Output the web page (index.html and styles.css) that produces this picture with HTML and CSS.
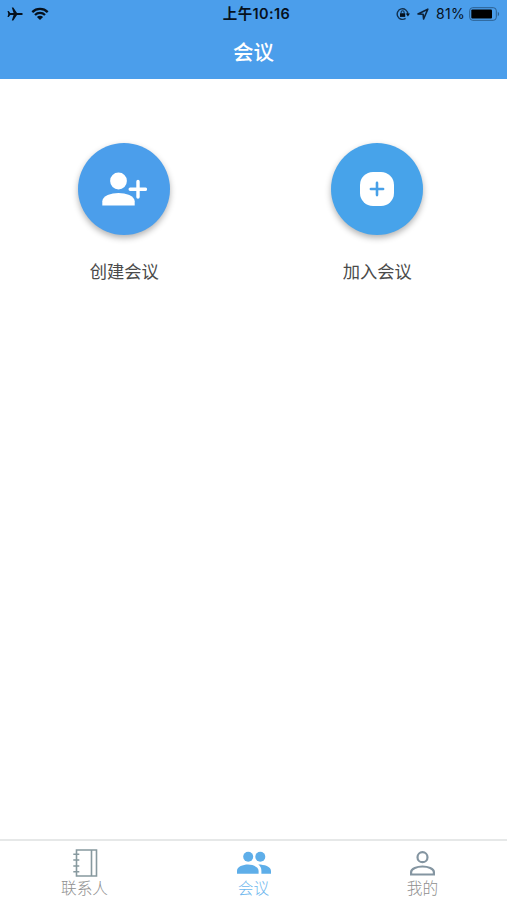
FILE: index.html
```html
<!DOCTYPE html>
<html lang="zh-CN">
<head>
  <meta charset="UTF-8" />
  <meta name="viewport" content="width=device-width, initial-scale=1" />
  <title>会议</title>
  <link rel="stylesheet" href="styles.css">
</head>
<body>
  <header class="header">
    <div class="status-bar">
      <div class="status-left">
        <svg width="16" height="14" viewBox="0 0 16 14"><path d="M15.8 7c0-.7-.8-1-1.8-1h-4L6.3.6H4.8L6.6 6H3.2L1.7 4.1H.5L1.3 7l-.8 2.9h1.2L3.2 8h3.4l-1.8 5.4h1.5L10 8h4c1 0 1.8-.3 1.8-1z"/></svg>
        <svg width="18" height="14" viewBox="0 0 18 14"><path d="M1.3 5.1a11 11 0 0 1 15.4 0M4 8a7.1 7.1 0 0 1 10 0" fill="none" stroke="#06111d" stroke-width="2.3"/><path d="M9 13 5.9 10a4.4 4.4 0 0 1 6.2 0z"/></svg>
      </div>
      <div class="status-time">上午10:16</div>
      <div class="status-right">
        <svg width="14" height="14" viewBox="0 0 14 14"><path d="M11.8 7A5.3 5.3 0 1 0 9.6 11.4" fill="none" stroke="#12304d" stroke-width="1.4"/><path d="M9.8 6.6h4.2l-2.1 2.9z"/><path d="M4 6.2h5.2v3.7H4z"/><path d="M5.1 6.5V5.2a1.5 1.5 0 0 1 3 0v1.3" fill="none" stroke="#12304d" stroke-width="1.1"/></svg>
        <svg width="12" height="12" viewBox="0 0 12 12"><path d="M1 6 10.8 1.2 6.6 11 6.1 6.2z" fill="none" stroke="#0d2238" stroke-width="1.6" stroke-linejoin="round"/></svg>
        <span class="battery-text">81%</span>
        <svg width="31" height="14" viewBox="0 0 31 14"><rect x=".7" y=".7" width="26.6" height="12.6" rx="3" fill="none" stroke="#2b5e8f"/><rect x="2.3" y="2.5" width="20.7" height="9" rx="1" fill="#000"/><path d="M28.8 4.8c1.8.7 1.8 3.7 0 4.4z" fill="#2b5e8f"/></svg>
      </div>
    </div>
    <h1 class="title">会议</h1>
  </header>

  <main class="actions">
    <div class="action">
      <button class="circle" type="button" aria-label="创建会议">
        <svg width="46" height="34" viewBox="-1 0 46 34"><circle cx="16.5" cy="9" r="8.4"/><path d="M.3 33.5v-4.2C.3 23.9 9.3 21 16.5 21s16.2 2.9 16.2 8.3v4.2z"/><path d="M36 9.4v15.6M28.2 17.2h15.2" fill="none" stroke="#fff" stroke-width="3.4" stroke-linecap="round"/></svg>
      </button>
      <div class="action-label">创建会议</div>
    </div>
    <div class="action">
      <button class="circle circle-join" type="button" aria-label="加入会议">
        <svg width="34" height="34" viewBox="0 0 34 34"><rect width="34" height="34" rx="13"/><path d="M17 10.9v12.2M10.9 17h12.2" fill="none" stroke="#47a0e8" stroke-width="2.6" stroke-linecap="round"/></svg>
      </button>
      <div class="action-label">加入会议</div>
    </div>
  </main>

  <nav class="tabs">
    <a class="tab" href="#">
      <svg width="26" height="28" viewBox="0 0 26 28" fill="none" stroke="#87999f" stroke-width="1.6"><path d="M4.5 1h20v26h-20zM19.5 1v26"/><path d="M1.3 5.2h6M1.3 11h6M1.3 17h6M1.3 22.8h6"/></svg>
      <span>联系人</span>
    </a>
    <a class="tab active" href="#">
      <svg width="34" height="28" viewBox="0 0 34 28"><g fill="#5eaee9"><circle cx="11.2" cy="7.7" r="5"/><path d="M0 24.7v-2.8c0-4.2 6-6.3 11-6.3s10.6 2.1 10.6 6.3v2.8z"/><circle cx="23.3" cy="7.7" r="5"/><path d="M21.3 15.6c6 0 12.7 2 12.7 6.3v2.8h-9.6v-2.8c0-2.8-1-4.8-3.1-6.3z"/></g></svg>
      <span>会议</span>
    </a>
    <a class="tab" href="#">
      <svg width="26" height="28" viewBox="0 0 26 28" fill="none" stroke="#8495a1" stroke-width="2.2"><circle cx="12.5" cy="8.2" r="5"/><path d="M1.1 25.5v-2.4c0-3.6 6-5.6 11.4-5.6s11.4 2 11.4 5.6v2.4z"/></svg>
      <span>我的</span>
    </a>
  </nav>
</body>
</html>
```

FILE: styles.css
```css
* {
  box-sizing: border-box;
}
body {
  margin: 0;
  height: 100vh;
  display: flex;
  flex-direction: column;
  background: #fff;
  font-family: "Liberation Sans", "Noto Sans CJK SC", sans-serif;
}
svg {
  display: block;
  flex: none;
}
.header {
  height: 79px;
  background: #4b9eeb;
}
.status-bar {
  display: grid;
  grid-template-columns: 1fr auto 1fr;
  align-items: center;
  height: 27px;
  padding: 0 7px;
  color: #06111d;
  fill: #06111d;
}
.status-left {
  display: flex;
  align-items: center;
  gap: 8px;
}
.status-time {
  font-family: Inter, "Noto Sans CJK SC", sans-serif;
  font-size: 14.5px;
  font-weight: 600;
  letter-spacing: 0.4px;
  line-height: 27px;
  padding-left: 6px;
}
.status-right {
  display: flex;
  align-items: center;
  justify-content: flex-end;
  gap: 7px;
}
.battery-text {
  font-family: Inter, sans-serif;
  font-size: 14px;
  letter-spacing: 0.3px;
  margin-right: -3px;
}
.title {
  margin: 0;
  color: #fff;
  font-size: 20.5px;
  font-weight: 500;
  line-height: 52px;
  text-align: center;
}
.actions {
  flex: 1;
  display: flex;
  justify-content: center;
  gap: 161px;
  padding: 64px 5.5px 0 0;
}
.action {
  width: 92px;
  text-align: center;
}
.circle {
  display: flex;
  align-items: center;
  justify-content: center;
  width: 92px;
  height: 92px;
  padding: 0;
  border: none;
  border-radius: 50%;
  background: #4b9eeb;
  fill: #fff;
  box-shadow: 0 3px 6px rgba(0, 0, 0, 0.3);
}
.circle-join {
  background: #47a3ea;
}
.action-label {
  margin-top: 24px;
  color: #4a4a4a;
  font-size: 17.3px;
  line-height: 26px;
}
.tabs {
  display: flex;
  height: 61px;
  padding-top: 8px;
  border-top: 2px solid #e6e8e8;
}
.tab {
  flex: 1;
  display: flex;
  flex-direction: column;
  align-items: center;
  color: #8f8f8f;
  font-size: 15.7px;
  font-weight: 300;
  line-height: 24px;
  text-decoration: none;
}
.active {
  color: #6fb8ee;
}
```
